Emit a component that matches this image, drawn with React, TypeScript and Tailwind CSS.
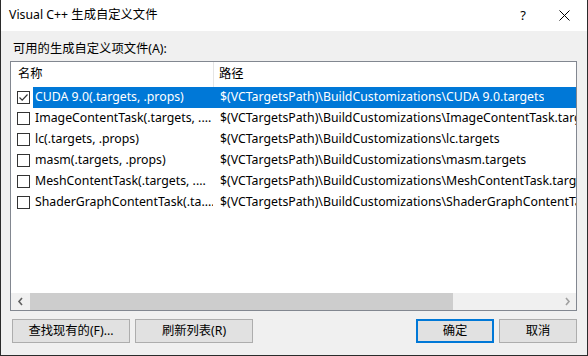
import React from 'react';

const rows = [
  { name: 'CUDA 9.0(.targets, .props)', path: '$(VCTargetsPath)\\BuildCustomizations\\CUDA 9.0.targets', checked: true, selected: true },
  { name: 'ImageContentTask(.targets, ....', path: '$(VCTargetsPath)\\BuildCustomizations\\ImageContentTask.targets', checked: false, selected: false },
  { name: 'lc(.targets, .props)', path: '$(VCTargetsPath)\\BuildCustomizations\\lc.targets', checked: false, selected: false },
  { name: 'masm(.targets, .props)', path: '$(VCTargetsPath)\\BuildCustomizations\\masm.targets', checked: false, selected: false },
  { name: 'MeshContentTask(.targets, ....', path: '$(VCTargetsPath)\\BuildCustomizations\\MeshContentTask.targets', checked: false, selected: false },
  { name: 'ShaderGraphContentTask(.ta....', path: '$(VCTargetsPath)\\BuildCustomizations\\ShaderGraphContentTask.targets', checked: false, selected: false },
];

const font = { fontFamily: '"Noto Sans", "Noto Sans CJK SC", sans-serif' };

const CheckBox: React.FC<{ checked: boolean }> = ({ checked }) => (
  <div className="w-[13px] h-[13px] border border-[#333333] bg-white flex items-center justify-center">
    {checked && (
      <svg width="11" height="11" viewBox="0 0 11 11">
        <path d="M1.5 5.5 L4.2 8.2 L9.5 2.5" fill="none" stroke="#333333" strokeWidth="1.2" />
      </svg>
    )}
  </div>
);

export default function App() {
  return (
    <div className="w-[588px] h-[356px] border border-t-0 border-[#2b2b2b] bg-[#f0f0f0] flex flex-col text-[12.3px] text-black" style={font}>
      <div className="h-[31px] bg-white flex items-center pl-[8px] shrink-0">
        <span className="flex-1">Visual C++ 生成自定义文件</span>
        <span className="w-[20px] text-center mr-[26px] text-[13px]">?</span>
        <svg width="11" height="11" viewBox="0 0 11 11" className="mr-[17px]">
          <path d="M0.5 0.5 L10.5 10.5 M10.5 0.5 L0.5 10.5" stroke="#000" strokeWidth="1" />
        </svg>
      </div>

      <div className="flex flex-col pl-[9px] pr-[10px] flex-1">
        <div className="h-[16px] mt-[10px] mb-[4px] pl-[3px] leading-[16px]">可用的生成自定义项文件(A):</div>

        <div className="h-[250px] border border-[#828790] bg-white flex flex-col overflow-hidden">
          <div className="h-[25px] flex items-center shrink-0">
            <div className="w-[202px] pl-[7px]">名称</div>
            <div className="w-px h-full bg-[#e5e5e5]" />
            <div className="pl-[5px]">路径</div>
          </div>
          {rows.map((r) => (
            <div key={r.name} className="h-[21px] flex items-center shrink-0">
              <div className="w-[22px] pl-[6px] shrink-0">
                <CheckBox checked={r.checked} />
              </div>
              <div className={`flex-1 h-full flex items-center min-w-0 ${r.selected ? 'bg-[#0078d7] text-white' : ''}`}>
                <div className="w-[180px] pl-[2px] shrink-0 whitespace-nowrap overflow-hidden">{r.name}</div>
                <div className="pl-[7px] whitespace-nowrap overflow-hidden">{r.path}</div>
              </div>
            </div>
          ))}
          <div className="flex-1" />
          <div className="h-[17px] flex bg-[#f0f0f0] shrink-0">
            <div className="w-[19px] flex items-center justify-center">
              <svg width="7" height="9" viewBox="0 0 7 9">
                <path d="M5 1 L2 4.5 L5 8" fill="none" stroke="#606060" strokeWidth="1.6" />
              </svg>
            </div>
            <div className="w-[423px] h-full bg-[#cdcdcd]" />
            <div className="flex-1" />
            <div className="w-[17px] flex items-center justify-center">
              <svg width="7" height="9" viewBox="0 0 7 9">
                <path d="M2 1 L5 4.5 L2 8" fill="none" stroke="#a0a0a0" strokeWidth="1.6" />
              </svg>
            </div>
          </div>
        </div>

        <div className="flex mt-[8px] pl-[2px]">
          <button className="w-[118px] h-[24px] border border-[#adadad] bg-[#e1e1e1]">查找现有的(F)...</button>
          <button className="w-[118px] h-[24px] ml-[5px] border border-[#adadad] bg-[#e1e1e1]">刷新列表(R)</button>
          <div className="flex-1" />
          <button className="w-[78px] h-[24px] border-2 border-[#0078d7] bg-[#e1e1e1]">确定</button>
          <button className="w-[78px] h-[24px] ml-[5px] border border-[#adadad] bg-[#e1e1e1]">取消</button>
        </div>
      </div>
    </div>
  );
}
